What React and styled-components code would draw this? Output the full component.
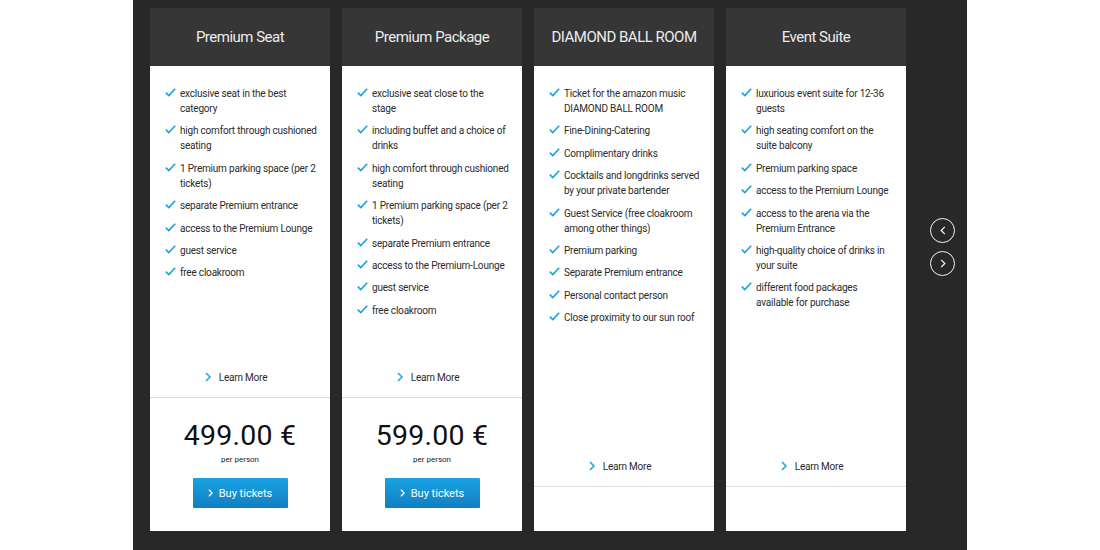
import React from "react";
import styled, { createGlobalStyle } from "styled-components";

const GlobalStyle = createGlobalStyle`
  html, body {
    margin: 0;
    padding: 0;
    background: #ffffff;
    font-family: Roboto, "Liberation Sans", Arial, sans-serif;
  }
`;

// line breaks follow the original layout
const cards = [
  {
    title: "Premium Seat",
    price: "499.00 €",
    items: [
      "exclusive seat in the best\ncategory",
      "high comfort through cushioned\nseating",
      "1 Premium parking space (per 2\ntickets)",
      "separate Premium entrance",
      "access to the Premium Lounge",
      "guest service",
      "free cloakroom",
    ],
  },
  {
    title: "Premium Package",
    price: "599.00 €",
    items: [
      "exclusive seat close to the\nstage",
      "including buffet and a choice of\ndrinks",
      "high comfort through cushioned\nseating",
      "1 Premium parking space (per 2\ntickets)",
      "separate Premium entrance",
      "access to the Premium-Lounge",
      "guest service",
      "free cloakroom",
    ],
  },
  {
    title: "DIAMOND BALL ROOM",
    items: [
      "Ticket for the amazon music\nDIAMOND BALL ROOM",
      "Fine-Dining-Catering",
      "Complimentary drinks",
      "Cocktails and longdrinks served\nby your private bartender",
      "Guest Service (free cloakroom\namong other things)",
      "Premium parking",
      "Separate Premium entrance",
      "Personal contact person",
      "Close proximity to our sun roof",
    ],
  },
  {
    title: "Event Suite",
    items: [
      "luxurious event suite for 12-36\nguests",
      "high seating comfort on the\nsuite balcony",
      "Premium parking space",
      "access to the Premium Lounge",
      "access to the arena via the\nPremium Entrance",
      "high-quality choice of drinks in\nyour suite",
      "different food packages\navailable for purchase",
    ],
  },
];

const Panel = styled.section`
  width: 834px;
  height: 550px;
  margin-left: 133px;
  background: #282828;
  box-sizing: border-box;
  padding: 8px 0 0 17px;
  display: flex;
`;

const CardRow = styled.div`
  display: flex;
  gap: 12px;
  height: 523px;
`;

const Card = styled.article`
  width: 180px;
  display: flex;
  flex-direction: column;
  background: #ffffff;
`;

const CardHeader = styled.header`
  height: 58px;
  background: #363636;
  color: #ececec;
  display: flex;
  align-items: center;
  justify-content: center;
  font-size: 15px;
  letter-spacing: -0.5px;
  padding-bottom: 1px;
  box-sizing: border-box;
`;

const FeatureList = styled.ul`
  list-style: none;
  margin: 0;
  padding: 20px 4px 0 15px;
  flex: 1;
  display: flex;
  flex-direction: column;
  gap: 7.4px;
`;

const Feature = styled.li`
  display: flex;
  gap: 4px;
  font-size: 10px;
  line-height: 15px;
  letter-spacing: -0.2px;
  color: #2b2b2b;
  white-space: pre-line;
`;

const CheckIcon = styled.svg`
  flex: none;
  width: 11px;
  height: 9px;
  margin-top: 2px;
`;

const LearnMore = styled.div`
  height: 40px;
  display: flex;
  align-items: center;
  justify-content: center;
  gap: 8px;
  font-size: 10px;
  letter-spacing: -0.2px;
  color: #2b2b2b;
  border-bottom: 1px solid #dddddd;
  padding-right: 8px;
`;

const Footer = styled.div`
  height: ${(p) => (p.$priced ? "133px" : "44px")};
  display: flex;
  flex-direction: column;
  align-items: center;
  box-sizing: border-box;
  padding-top: 22px;
`;

const Price = styled.div`
  font-size: 28.5px;
  line-height: 32px;
  color: #111111;
  letter-spacing: 0.2px;
`;

const PerPerson = styled.div`
  font-size: 8px;
  color: #222222;
  margin-top: 3px;
`;

const BuyButton = styled.button`
  margin-top: 14px;
  width: 95px;
  height: 30px;
  border: none;
  border-radius: 1px;
  background: linear-gradient(#1ba2e3, #0f7fc2);
  color: #ffffff;
  font-family: inherit;
  font-size: 11px;
  display: flex;
  align-items: center;
  justify-content: center;
  gap: 6px;
  padding: 0;
`;

const Nav = styled.div`
  display: flex;
  flex-direction: column;
  gap: 8px;
  margin: 210px 0 0 24px;
`;

const NavButton = styled.button`
  width: 25px;
  height: 25px;
  border-radius: 50%;
  border: 1.5px solid #f2f2f2;
  background: transparent;
  padding: 0;
  display: flex;
  align-items: center;
  justify-content: center;
`;

const Check = () => (
  <CheckIcon viewBox="0 0 11 9">
    <polyline points="0.8,4.6 3.8,7.6 10.2,0.8" fill="none" stroke="#1a9fe0" strokeWidth="1.6" />
  </CheckIcon>
);

const Chevron = ({ color = "#1a9fe0", dir = "right", w = 6, h = 10, sw = 1.5 }) => (
  <svg width={w} height={h} viewBox="0 0 6 10">
    <polyline
      points={dir === "right" ? "1,1 5,5 1,9" : "5,1 1,5 5,9"}
      fill="none"
      stroke={color}
      strokeWidth={sw}
    />
  </svg>
);

const App = () => (
  <>
    <GlobalStyle />
    <Panel>
      <CardRow>
        {cards.map((card) => (
          <Card key={card.title}>
            <CardHeader>{card.title}</CardHeader>
            <FeatureList>
              {card.items.map((item) => (
                <Feature key={item}>
                  <Check />
                  <span>{item}</span>
                </Feature>
              ))}
            </FeatureList>
            <LearnMore>
              <Chevron />
              <span>Learn More</span>
            </LearnMore>
            <Footer $priced={!!card.price}>
              {card.price && (
                <>
                  <Price>{card.price}</Price>
                  <PerPerson>per person</PerPerson>
                  <BuyButton>
                    <Chevron color="#ffffff" w={5} h={8} sw={1.6} />
                    Buy tickets
                  </BuyButton>
                </>
              )}
            </Footer>
          </Card>
        ))}
      </CardRow>
      <Nav>
        <NavButton aria-label="previous">
          <Chevron color="#f2f2f2" dir="left" w={6} h={9} sw={1.4} />
        </NavButton>
        <NavButton aria-label="next">
          <Chevron color="#f2f2f2" w={6} h={9} sw={1.4} />
        </NavButton>
      </Nav>
    </Panel>
  </>
);

export default App;
